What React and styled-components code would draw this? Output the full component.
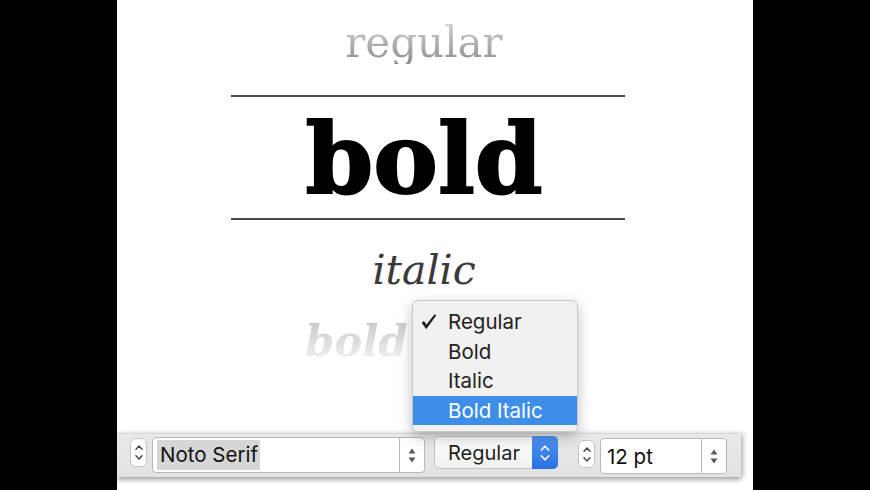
import React from 'react';
import styled, { createGlobalStyle } from 'styled-components';

const Global = createGlobalStyle`
  html, body { margin: 0; padding: 0; background: #000; }
  body { font-family: Inter, "Liberation Sans", sans-serif; }
`;

const Page = styled.div`
  width: 870px;
  height: 490px;
  background: #000;
  display: flex;
  justify-content: center;
  overflow: hidden;
`;

const Sheet = styled.div`
  width: 636px;
  height: 490px;
  background: #fff;
  display: flex;
  flex-direction: column;
`;

const Samples = styled.div`
  display: flex;
  flex-direction: column;
  align-items: center;
  padding-right: 14px;
`;

const Sample = styled.div`
  font-family: "DejaVu Serif", serif;
  font-size: ${p => p.$size}px;
  line-height: ${p => p.$size}px;
  margin-top: ${p => p.$top}px;
  margin-right: 8px;
  font-weight: ${p => p.$weight || 400};
  font-style: ${p => (p.$italic ? 'italic' : 'normal')};
  color: ${p => p.$color || '#000'};
  -webkit-text-stroke: ${p => p.$stroke || 0}px ${p => p.$color || '#000'};
  white-space: nowrap;
`;

const FadedSample = styled(Sample)`
  background: ${p => p.$grad};
  -webkit-background-clip: text;
  background-clip: text;
  color: transparent;
  -webkit-text-stroke: 0;
  align-self: ${p => (p.$start ? 'flex-start' : 'center')};
  margin-left: ${p => p.$left || 0}px;
`;

const Rule = styled.div`
  width: 394px;
  height: 2px;
  background: #4a4a4a;
  margin-top: ${p => p.$top}px;
`;

const Toolbar = styled.div`
  margin-top: auto;
  margin-bottom: 13px;
  width: 624px;
  height: 44px;
  box-sizing: border-box;
  background: linear-gradient(#e9e9e9, #e2e2e2);
  border-top: 1px solid #d6d6d6;
  box-shadow: 0 3px 5px rgba(0, 0, 0, 0.3), 3px 0 5px rgba(0, 0, 0, 0.15);
  display: flex;
  align-items: flex-start;
  padding-left: 13px;
`;

const Stepper = styled.div`
  width: 17px;
  height: ${p => p.$h}px;
  margin-top: ${p => p.$mt}px;
  margin-left: ${p => p.$ml || 0}px;
  box-sizing: border-box;
  background: #fff;
  border: 1px solid #c4c4c4;
  border-radius: 6px;
  display: flex;
  flex-direction: column;
  align-items: center;
  justify-content: center;
  gap: 5px;
`;

const Field = styled.div`
  width: ${p => p.$w}px;
  height: 36px;
  margin-top: ${p => p.$mt}px;
  margin-left: ${p => p.$ml}px;
  box-sizing: border-box;
  background: #fff;
  border: 1px solid #b8b8b8;
  border-radius: 4px;
  display: flex;
  align-items: stretch;
`;

const FieldText = styled.div`
  flex: 1;
  display: flex;
  align-items: center;
  padding-left: ${p => p.$pl}px;
  font-size: 20.5px;
  color: #111;
`;

const Selected = styled.span`
  background: #d6d6d6;
  padding: 2px 2px 3px 3px;
`;

const FieldArrows = styled.div`
  width: 24px;
  border-left: 1px solid #b8b8b8;
  display: flex;
  flex-direction: column;
  align-items: center;
  justify-content: center;
  gap: 3px;
`;

const Popup = styled.div`
  position: relative;
  width: 124px;
  height: 33px;
  margin-top: 2px;
  margin-left: 9px;
  box-sizing: border-box;
  border: 1px solid #c3c3c3;
  border-radius: 5px;
  background: linear-gradient(#fdfdfd, #f1f1f1);
  display: flex;
`;

const PopupLabel = styled.div`
  flex: 1;
  display: flex;
  align-items: center;
  padding-left: 13px;
  font-size: 20px;
  color: #1e1e1e;
`;

const PopupArrows = styled.div`
  width: 26px;
  margin: -1px -1px -1px 0;
  border-radius: 0 5px 5px 0;
  background: linear-gradient(#4f97f4, #2b6fe0);
  display: flex;
  flex-direction: column;
  align-items: center;
  justify-content: center;
  gap: 4px;
`;

const Menu = styled.div`
  position: absolute;
  left: -23px;
  bottom: calc(100% + 5px);
  width: 166px;
  box-sizing: border-box;
  padding: 6px 0;
  background: rgba(241, 241, 241, 0.98);
  border: 1px solid #c7c7c7;
  border-radius: 6px;
  box-shadow: 0 5px 14px rgba(0, 0, 0, 0.25);
  z-index: 2;
`;

const MenuItem = styled.div`
  height: 29.5px;
  display: flex;
  align-items: center;
  padding-left: 8px;
  font-size: 20.5px;
  color: ${p => (p.$active ? '#fff' : '#222')};
  background: ${p => (p.$active ? '#3d8ee9' : 'transparent')};
`;

const CheckSlot = styled.div`
  width: 27px;
  display: flex;
  align-items: center;
`;

const ChevUp = ({ color = '#444', w = 8 }) => (
  <svg width={w} height={w / 2 + 1} viewBox="0 0 8 5">
    <path d="M1 4.2 L4 1 L7 4.2" fill="none" stroke={color} strokeWidth="1.4" strokeLinecap="round" strokeLinejoin="round" />
  </svg>
);
const ChevDown = ({ color = '#444', w = 8 }) => (
  <svg width={w} height={w / 2 + 1} viewBox="0 0 8 5">
    <path d="M1 0.8 L4 4 L7 0.8" fill="none" stroke={color} strokeWidth="1.4" strokeLinecap="round" strokeLinejoin="round" />
  </svg>
);
const TriUp = () => (
  <svg width="8" height="6" viewBox="0 0 8 6">
    <path d="M4 0.5 L7.5 5.5 L0.5 5.5 Z" fill="#5a5a5a" />
  </svg>
);
const TriDown = () => (
  <svg width="8" height="6" viewBox="0 0 8 6">
    <path d="M0.5 0.5 L7.5 0.5 L4 5.5 Z" fill="#5a5a5a" />
  </svg>
);
const Check = () => (
  <svg width="16" height="16" viewBox="0 0 16 16">
    <path d="M1.2 8.8 L5.2 14.6 L14.8 1.4 L13.6 0.8 L5.4 11.2 L3 7.6 Z" fill="#1e1e1e" stroke="#1e1e1e" strokeWidth="0.9" strokeLinejoin="round" />
  </svg>
);

const styles = ['Regular', 'Bold', 'Italic', 'Bold Italic'];

export default function App() {
  return (
    <Page>
      <Global />
      <Sheet>
        <Samples>
          <FadedSample $size={42} $top={22} $grad="linear-gradient(#d2d2d2, #8e8e8e)">regular</FadedSample>
          <Rule $top={31} />
          <Sample $size={97} $top={14} $weight={700} $stroke={2}>bold</Sample>
          <Rule $top={10} />
          <Sample $size={41} $top={30} $italic $color="#3a3a3a">italic</Sample>
          <FadedSample $size={42} $top={30} $italic $weight={700} $start $left={188} $grad="linear-gradient(#c9c9c9, #f3f3f3)">bold</FadedSample>
        </Samples>
        <Toolbar>
          <Stepper $h={29} $mt={4}>
            <ChevUp />
            <ChevDown />
          </Stepper>
          <Field $w={273} $mt={3} $ml={5}>
            <FieldText $pl={4}><Selected>Noto Serif</Selected></FieldText>
            <FieldArrows><TriUp /><TriDown /></FieldArrows>
          </Field>
          <Popup>
            <PopupLabel>Regular</PopupLabel>
            <PopupArrows>
              <ChevUp color="#fff" w={10} />
              <ChevDown color="#fff" w={10} />
            </PopupArrows>
            <Menu>
              {styles.map((s, i) => (
                <MenuItem key={s} $active={i === 3}>
                  <CheckSlot>{i === 0 && <Check />}</CheckSlot>
                  {s}
                </MenuItem>
              ))}
            </Menu>
          </Popup>
          <Stepper $h={28} $mt={6} $ml={20}>
            <ChevUp />
            <ChevDown />
          </Stepper>
          <Field $w={127} $mt={4} $ml={5}>
            <FieldText $pl={6}>12 pt</FieldText>
            <FieldArrows><TriUp /><TriDown /></FieldArrows>
          </Field>
        </Toolbar>
      </Sheet>
    </Page>
  );
}
